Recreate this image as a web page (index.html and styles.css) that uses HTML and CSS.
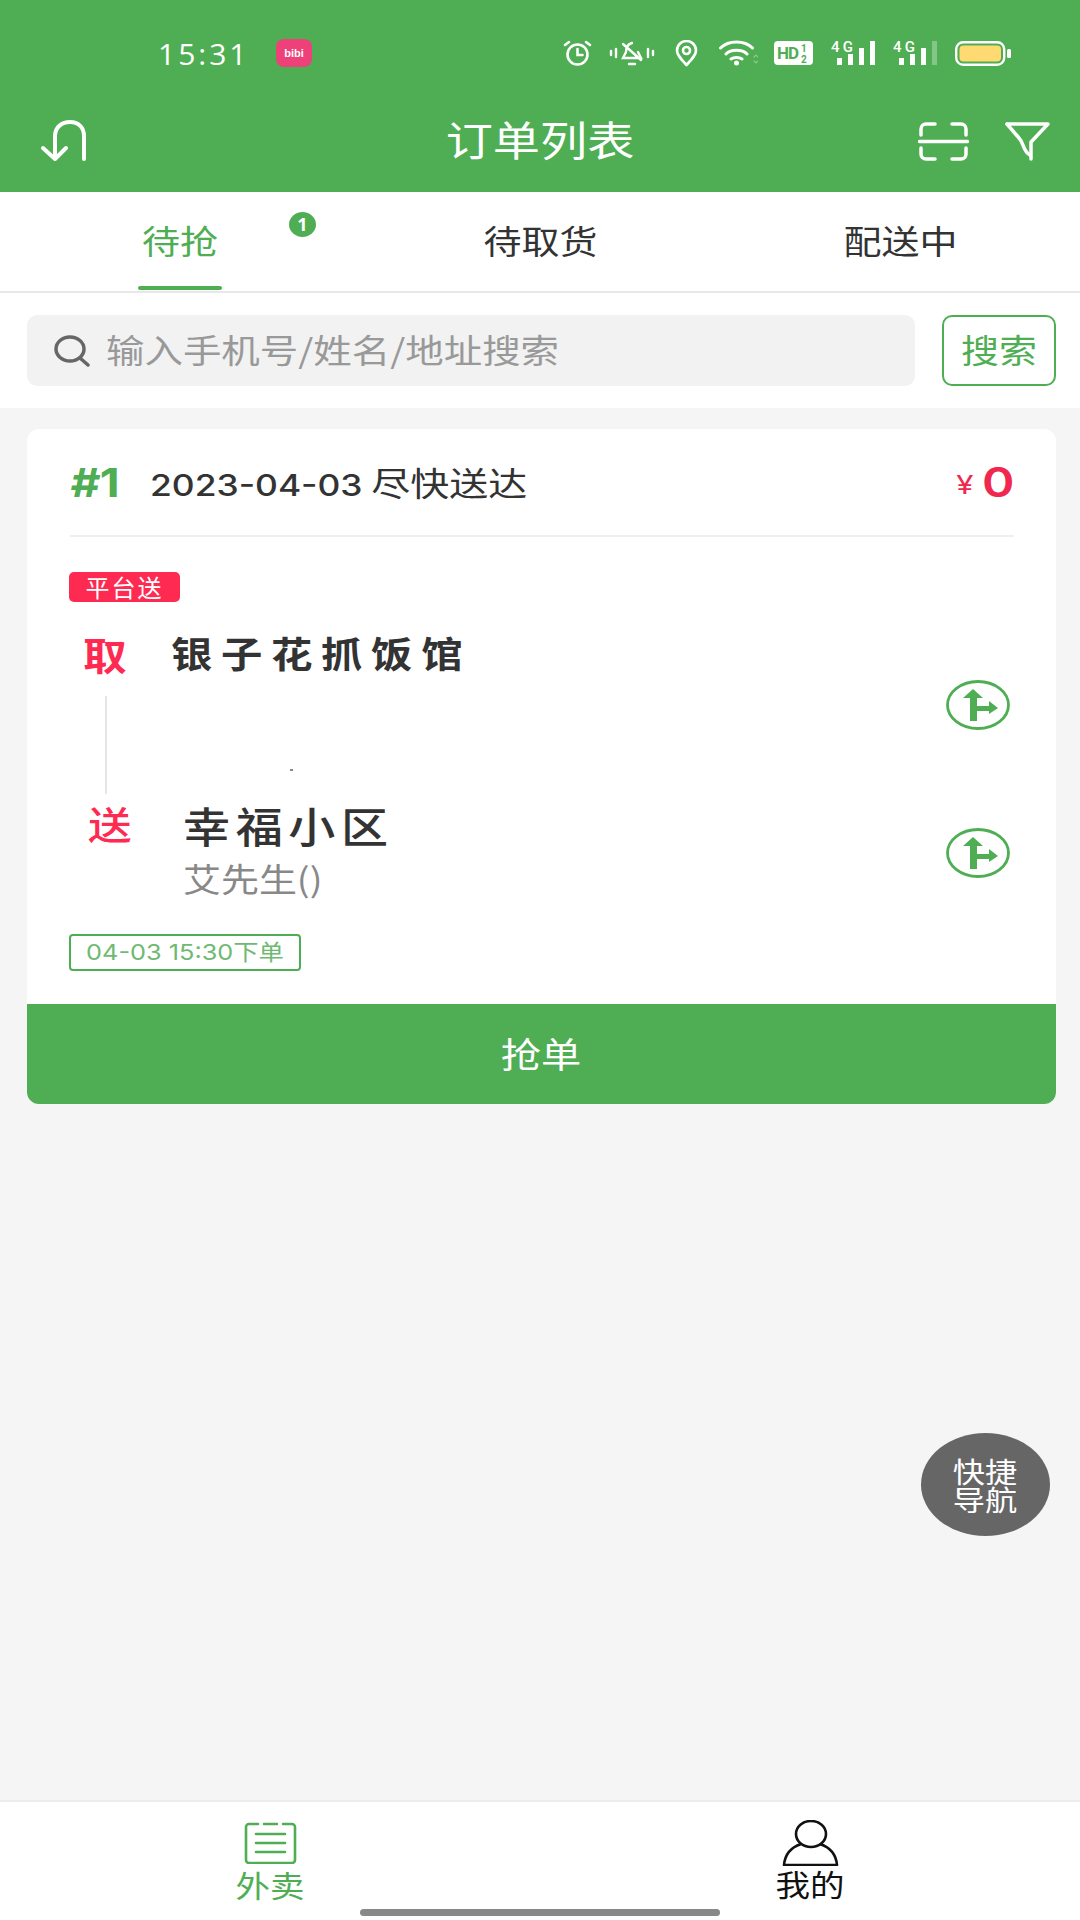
FILE: index.html
```html
<!DOCTYPE html>
<html lang="zh-CN">
<head>
    <meta charset="UTF-8">
    <meta name="viewport" content="width=device-width, initial-scale=1.0">
    <title>订单列表</title>
    <link rel="stylesheet" href="styles.css">
</head>
<body>
    <div class="app">
        <header class="top">
            <div class="status-bar">
                <span class="time">15:31</span>
                <svg class="app-badge" width="36" height="28" viewBox="0 0 36 28">
                    <rect width="36" height="28" rx="8" fill="#ee4079"/>
                    <text x="18" y="18" text-anchor="middle" font-size="11" font-weight="700" fill="#fff" font-family="Liberation Sans, sans-serif">bibi</text>
                </svg>
                <div class="status-icons">
                    <svg width="31" height="26" viewBox="0 0 31 26" fill="none" stroke="#fff" stroke-width="2.6" stroke-linecap="round">
                        <circle cx="15.5" cy="14.5" r="10"/>
                        <path d="M15.5 9v6h5M3 5l4-3M28 5l-4-3"/>
                    </svg>
                    <svg class="gap-16" width="46" height="26" viewBox="0 0 46 26" fill="none" stroke="#fff" stroke-width="2.4" stroke-linecap="round">
                        <path d="M2 11v4M7 9v8M39 9v8M44 11v4"/>
                        <path d="M23 3c-4 1-6 5-6 9l-3 6h18l-3-6M20 24h6M14 4l18 16"/>
                    </svg>
                    <svg class="gap-20" width="23" height="27" viewBox="0 0 23 27" fill="none" stroke="#fff" stroke-width="2.6">
                        <path d="M11.5 25C6 19 2 15 2 10.500a9.500 9.500 0 0 1 19 0C21 15 17 19 11.500 25z" stroke-linejoin="round"/>
                        <circle cx="11.500" cy="10.500" r="3.500"/>
                    </svg>
                    <svg class="gap-21" width="39" height="26" viewBox="0 0 39 26" fill="none" stroke="#fff" stroke-width="3" stroke-linecap="round">
                        <path d="M1.500 8c8-8 24-8 32 0M7 14c5-5 16-5 21 0M12 19c3-2 8-2 11 0"/>
                        <circle cx="17.500" cy="23" r="2.500" fill="#fff" stroke="none"/>
                        <path d="M35 17l2-2 2 2M35 21l2 2 2-2" stroke="#8cc98f" stroke-width="1.200"/>
                    </svg>
                    <svg class="gap-16" width="39" height="24" viewBox="0 0 39 24">
                        <rect width="39" height="24" rx="4" fill="#fff"/>
                        <text x="3" y="18" font-size="17" font-weight="700" fill="#4fae53" font-family="Roboto, sans-serif" textLength="22">HD</text>
                        <text x="27" y="11" font-size="10" font-weight="700" fill="#4fae53" font-family="Roboto, sans-serif">1</text>
                        <text x="27" y="22" font-size="10" font-weight="700" fill="#4fae53" font-family="Roboto, sans-serif">2</text>
                    </svg>
                    <svg class="gap-18 signal" width="44" height="26" viewBox="0 0 44 26" fill="#fff">
                        <text x="0" y="12" font-size="15" font-weight="500" font-family="Roboto, sans-serif" textLength="22">4G</text>
                        <rect x="6" y="18" width="5" height="7"/>
                        <rect x="17" y="14" width="5" height="11"/>
                        <rect x="28" y="8" width="5" height="17"/>
                        <rect x="39" y="1" width="5" height="24"/>
                    </svg>
                    <svg class="gap-18 signal" width="44" height="26" viewBox="0 0 44 26" fill="#fff">
                        <text x="0" y="12" font-size="15" font-weight="500" font-family="Roboto, sans-serif" textLength="22">4G</text>
                        <rect x="6" y="18" width="5" height="7"/>
                        <rect x="17" y="14" width="5" height="11"/>
                        <rect x="28" y="8" width="5" height="17"/>
                        <rect x="39" y="1" width="5" height="24" opacity="0.3"/>
                    </svg>
                    <svg class="gap-18" width="56" height="25" viewBox="0 0 56 25">
                        <rect x="1.200" y="1.200" width="48" height="22.600" rx="7" fill="none" stroke="#fff" stroke-width="2.400"/>
                        <rect x="4.500" y="4.500" width="41.500" height="16" rx="4" fill="#ffd971"/>
                        <rect x="52" y="8" width="4" height="9" rx="1.500" fill="#fff"/>
                    </svg>
                </div>
            </div>
            <div class="title-bar">
                <svg width="46" height="42" viewBox="0 0 46 42" fill="none" stroke="#fff" stroke-width="4" stroke-linecap="round" stroke-linejoin="round">
                    <path d="M44 39V16C44 7 38 2 30 2S15 7 15 16V38"/>
                    <path d="M3 28L15 39L26 28"/>
                </svg>
                <h1><span class="wide">订单列表</span></h1>
                <div class="title-actions">
                    <svg width="51" height="39" viewBox="0 0 51 39" fill="none" stroke="#fff" stroke-width="3.500" stroke-linecap="round">
                        <path d="M3 13V7a5 5 0 0 1 5-5h9M34 2h9a5 5 0 0 1 5 5v6M3 26v6a5 5 0 0 0 5 5h9M34 37h9a5 5 0 0 0 5-5v-6M1.500 19.500h48"/>
                    </svg>
                    <svg width="45" height="40" viewBox="0 0 45 40" fill="none" stroke="#fff" stroke-width="3.500" stroke-linecap="round" stroke-linejoin="round">
                        <path d="M2 3H43L26 21V38"/>
                        <path d="M2 3L14 17C19 22 18 31 25 34"/>
                    </svg>
                </div>
            </div>
        </header>

        <nav class="tabs">
            <a class="tab active" href="#"><span class="wide">待抢</span><span class="tab-badge">1</span></a>
            <a class="tab" href="#"><span class="wide">待取货</span></a>
            <a class="tab" href="#"><span class="wide">配送中</span></a>
        </nav>

        <div class="search-row">
            <div class="search-box">
                <svg width="36" height="32" viewBox="0 0 36 32" fill="none" stroke="#666" stroke-width="3.500" stroke-linecap="round">
                    <ellipse cx="16" cy="14" rx="14" ry="12"/>
                    <path d="M26 23l8 7"/>
                </svg>
                <span class="placeholder">输入手机号/姓名/地址搜索</span>
            </div>
            <button class="search-btn"><span class="wide">搜索</span></button>
        </div>

        <main class="content">
            <div class="order-card">
                <div class="order-head">
                    <span class="order-no"><em>#</em>1</span>
                    <span class="order-date"><b>2023-04-03</b> 尽快送达</span>
                    <span class="order-price"><small>¥</small>0</span>
                </div>
                <div class="order-body">
                    <span class="tag-red">平台送</span>
                    <div class="stops">
                        <div class="stop stop-pick">
                            <span class="stop-mark mark-pick">取</span>
                            <span class="shop-name">银子花抓饭馆</span>
                        </div>
                        <div class="stop-gap">
                            <i class="stop-line"></i>
                            <span class="stop-dot"></span>
                        </div>
                        <div class="stop stop-send">
                            <span class="stop-mark mark-send">送</span>
                            <div class="stop-info">
                                <div class="addr-name">幸福小区</div>
                                <div class="addr-user">艾先生()</div>
                            </div>
                        </div>
                        <svg class="route-icon route-pick" width="64" height="50" viewBox="0 0 64 50">
                            <ellipse cx="32" cy="25" rx="30.500" ry="23.500" fill="none" stroke="#4fae53" stroke-width="2.800"/>
                            <path fill="#4fae53" d="M27 9L37 18H31V26H43V21L52 28L43 34V31H31V41H24V18H17Z"/>
                        </svg>
                        <svg class="route-icon route-send" width="64" height="50" viewBox="0 0 64 50">
                            <ellipse cx="32" cy="25" rx="30.500" ry="23.500" fill="none" stroke="#4fae53" stroke-width="2.800"/>
                            <path fill="#4fae53" d="M27 9L37 18H31V26H43V21L52 28L43 34V31H31V41H24V18H17Z"/>
                        </svg>
                    </div>
                    <span class="tag-time"><span class="wide">04-03 15:30下单</span></span>
                </div>
                <button class="grab-btn"><span class="wide">抢单</span></button>
            </div>
            <a class="quick-nav" href="#"><span class="wide">快捷<br>导航</span></a>
        </main>

        <footer class="bottom-bar">
            <a class="bottom-item active" href="#">
                <svg width="53" height="42" viewBox="0 0 53 42" fill="none" stroke="#4fae53" stroke-width="2.600" stroke-linecap="round">
                    <path d="M14 2H5a3 3 0 0 0-3 3v33a3 3 0 0 0 3 3h43a3 3 0 0 0 3-3V5a3 3 0 0 0-3-3h-9M20 2h13M12 12h29M12 21h29M12 30h29"/>
                </svg>
                <span class="wide">外卖</span>
            </a>
            <a class="bottom-item" href="#">
                <svg width="57" height="46" viewBox="0 0 57 46" fill="none" stroke="#111" stroke-width="2.600" stroke-linejoin="round">
                    <ellipse cx="29" cy="14" rx="15" ry="13"/>
                    <path d="M19 24C10 27 3 34 2 45H55C54 34 47 27 38 24"/>
                </svg>
                <span class="wide">我的</span>
            </a>
            <i class="home-bar"></i>
        </footer>
    </div>
</body>
</html>
```

FILE: styles.css
```css
* {
    box-sizing: border-box;
}
body {
    margin: 0;
    font-family: "Noto Sans CJK SC", sans-serif;
    color: #333;
    background-color: #f5f5f5;
}
a {
    text-decoration: none;
    color: inherit;
}
svg {
    display: block;
    flex: 0 0 auto;
}
.app {
    width: 1080px;
    height: 1920px;
    display: flex;
    flex-direction: column;
    overflow: hidden;
}
/* the screenshot is stretched sideways, text follows */
.wide {
    display: inline-block;
    transform: scaleX(1.15);
}

/* green header */
.top {
    height: 192px;
    background-color: #4fae53;
    color: #fff;
}
.status-bar {
    height: 98px;
    padding: 8px 0 0 158px;
    display: flex;
    align-items: center;
}
.time {
    width: 118px;
    font-family: "Open Sans", sans-serif;
    font-size: 30px;
    font-weight: 500;
    letter-spacing: 3px;
}
.status-icons {
    margin-left: auto;
    margin-right: 69px;
    display: flex;
    align-items: center;
}
.signal {
    overflow: visible;
}
.gap-16 { margin-left: 16px; }
.gap-18 { margin-left: 18px; }
.gap-20 { margin-left: 20px; }
.gap-21 { margin-left: 21px; }
.title-bar {
    height: 86px;
    padding: 0 30px 0 40px;
    display: flex;
    align-items: center;
    justify-content: space-between;
    position: relative;
}
.title-bar h1 {
    margin: 0;
    position: absolute;
    left: 0;
    right: 0;
    top: 12px;
    text-align: center;
    font-size: 41px;
    font-weight: 400;
    line-height: 56px;
}
.title-actions {
    display: flex;
    align-items: center;
    gap: 36px;
}

/* tabs */
.tabs {
    height: 101px;
    background-color: #fff;
    border-bottom: 2px solid #e8e8e8;
    display: grid;
    grid-template-columns: repeat(3, 1fr);
}
.tab {
    position: relative;
    text-align: center;
    font-size: 33px;
    line-height: 96px;
}
.tab.active {
    color: #4fae53;
}
.tab.active::after {
    content: "";
    position: absolute;
    left: 138px;
    top: 94px;
    width: 84px;
    height: 4px;
    border-radius: 2px;
    background-color: #4fae53;
}
.tab-badge {
    position: absolute;
    left: 289px;
    top: 20px;
    width: 27px;
    height: 25px;
    border-radius: 50%;
    background-color: #4fae53;
    color: #fff;
    font-family: "Open Sans", sans-serif;
    font-size: 18px;
    font-weight: 700;
    line-height: 25px;
}

/* search */
.search-row {
    height: 115px;
    padding: 22px 24px 0 27px;
    background-color: #fff;
    display: flex;
    gap: 27px;
}
.search-box {
    width: 888px;
    height: 71px;
    padding-left: 27px;
    border-radius: 10px;
    background-color: #f2f2f2;
    display: flex;
    align-items: center;
    gap: 16px;
}
.placeholder {
    margin-top: -4px;
    font-size: 33px;
    color: #999;
    transform: scaleX(1.165);
    transform-origin: left;
}
.search-btn {
    width: 114px;
    height: 71px;
    padding: 0 0 4px;
    border: 2px solid #4fae53;
    border-radius: 10px;
    background-color: #fff;
    color: #4fae53;
    font-family: inherit;
    font-size: 33px;
}

/* order card */
.content {
    flex: 1;
    position: relative;
    padding: 21px 24px 0 27px;
}
.order-card {
    background-color: #fff;
    border-radius: 12px;
    overflow: hidden;
}
.order-head {
    height: 108px;
    margin: 0 42px 0 43px;
    border-bottom: 2px solid #eee;
    display: flex;
    align-items: center;
}
.order-no {
    width: 80px;
    font-family: Inter, sans-serif;
    font-size: 40px;
    font-weight: 700;
    color: #4fae53;
    transform: scaleX(1.15);
    transform-origin: left;
}
.order-no em {
    font-style: italic;
}
.order-date {
    margin-top: -2px;
    font-size: 32.500px;
    transform: scaleX(1.2);
    transform-origin: left;
}
.order-date b {
    font-family: Inter, sans-serif;
    font-size: 29.500px;
    font-weight: 500;
}
.order-price {
    margin-left: auto;
    font-family: Inter, sans-serif;
    font-size: 41px;
    font-weight: 600;
    color: #f0284f;
    transform: scaleX(1.2);
    transform-origin: right;
}
.order-price small {
    font-size: 26px;
    font-weight: 400;
    margin-right: 7px;
    vertical-align: 3px;
}
.order-body {
    padding: 35px 42px 0 42px;
    height: 467px;
}
.tag-red {
    display: block;
    width: 111px;
    height: 30px;
    border-radius: 5px;
    background-color: #ff2a52;
    color: #fff;
    text-align: center;
    font-size: 24px;
    line-height: 30px;
    letter-spacing: 2px;
}
.stops {
    position: relative;
    height: 302px;
}
.stop {
    display: flex;
    align-items: flex-start;
}
.stop-pick {
    height: 78px;
    padding-top: 25px;
}
.stop-mark {
    color: #ff2a52;
    font-size: 38px;
    line-height: 54px;
    transform: scaleX(1.15);
    transform-origin: left;
}
.mark-pick {
    width: 88px;
    margin-left: 14px;
    font-weight: 700;
}
.mark-send {
    width: 95px;
    margin-left: 19px;
    font-weight: 500;
}
.shop-name {
    font-size: 36px;
    font-weight: 700;
    line-height: 50px;
    letter-spacing: 7.500px;
    transform: scaleX(1.15);
    transform-origin: left;
}
.stop-gap {
    position: relative;
    height: 121px;
}
.stop-line {
    position: absolute;
    left: 36px;
    top: 16px;
    width: 2px;
    height: 98px;
    background-color: #e5e5e5;
}
.stop-dot {
    position: absolute;
    left: 221px;
    top: 89px;
    width: 3px;
    height: 2px;
    background-color: #888;
}
.stop-send {
    margin-top: -5px;
}
.addr-name {
    margin-top: -2px;
    font-size: 42px;
    font-weight: 500;
    line-height: 61px;
    letter-spacing: 5px;
    transform: scaleX(1.12);
    transform-origin: left;
}
.addr-user {
    font-size: 33px;
    line-height: 46px;
    color: #888;
    transform: scaleX(1.15);
    transform-origin: left;
}
.route-icon {
    position: absolute;
    left: 877px;
}
.route-pick {
    top: 78px;
}
.route-send {
    top: 226px;
}
.tag-time {
    display: block;
    width: 232px;
    height: 37px;
    margin-top: 30px;
    border: 2px solid #4fae53;
    border-radius: 4px;
    color: #6fb973;
    text-align: center;
    font-family: Inter, "Noto Sans CJK SC", sans-serif;
    font-size: 22px;
    line-height: 33px;
}
.grab-btn {
    display: block;
    width: 100%;
    height: 100px;
    padding: 0 0 4px;
    border: 0;
    background-color: #4fae53;
    color: #fff;
    font-family: inherit;
    font-size: 35px;
}

/* floating button */
.quick-nav {
    position: absolute;
    left: 921px;
    top: 1025px;
    width: 129px;
    height: 103px;
    border-radius: 50%;
    background-color: #666;
    color: #fff;
    display: flex;
    align-items: center;
    justify-content: center;
    text-align: center;
    font-size: 28px;
    line-height: 28px;
}

/* bottom bar */
.bottom-bar {
    position: relative;
    height: 120px;
    background-color: #fff;
    border-top: 2px solid #ececec;
    display: grid;
    grid-template-columns: 1fr 1fr;
}
.bottom-item {
    padding-top: 18px;
    display: flex;
    flex-direction: column;
    align-items: center;
    font-size: 30px;
    line-height: 40px;
    color: #111;
}
.bottom-item.active {
    padding-top: 20px;
    color: #4fae53;
}
.bottom-item.active .wide {
    margin-top: 0;
}
.bottom-item .wide {
    margin-top: -3px;
}
.home-bar {
    position: absolute;
    left: 360px;
    top: 107px;
    width: 360px;
    height: 7px;
    border-radius: 4px;
    background-color: #888;
}
```
